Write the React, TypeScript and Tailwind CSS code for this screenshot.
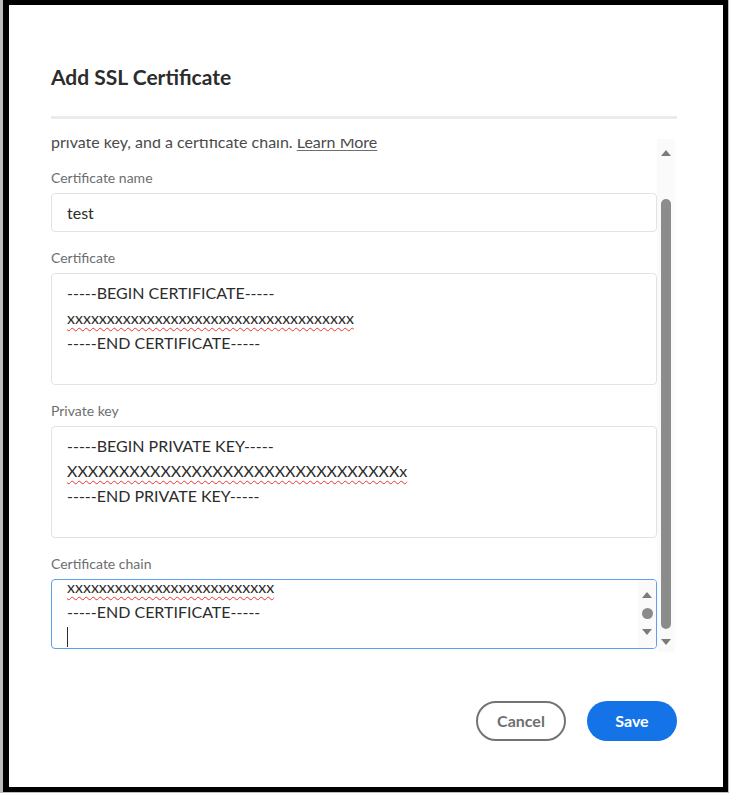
const font = { fontFamily: 'Lato, "Open Sans", Arial, sans-serif' };

function UpArrow({ className = '' }: { className?: string }) {
	return (
		<svg width="10" height="6" viewBox="0 0 10 6" className={className}>
			<path d="M0 6 L5 0 L10 6 Z" fill="#7b7b7b" />
		</svg>
	);
}

function DownArrow({ className = '' }: { className?: string }) {
	return (
		<svg width="10" height="6" viewBox="0 0 10 6" className={className}>
			<path d="M0 0 L10 0 L5 6 Z" fill="#7b7b7b" />
		</svg>
	);
}

function Squiggle({ children }: { children: string }) {
	return (
		<span className="underline decoration-wavy decoration-[#e33] decoration-1 underline-offset-[3px]">
			{children}
		</span>
	);
}

function Label({ children }: { children: string }) {
	return <div className="mb-[7px] text-[14px] leading-[17px] text-[#6e6e6e]">{children}</div>;
}

function PemBox({ lines }: { lines: Array<string | { squiggle: string }> }) {
	return (
		<div className="h-[112px] rounded-[4px] border border-[#e3e3e3] bg-white px-[15px] pt-[6px] text-[16px] leading-[25px] text-[#2c2c2c]">
			{lines.map((line, i) => (
				<div key={i}>{typeof line === 'string' ? line : <Squiggle>{line.squiggle}</Squiggle>}</div>
			))}
		</div>
	);
}

export default function App() {
	return (
		<div
			className="h-[793px] w-[729px] border-b border-l-[3px] border-r border-[#bcbcbc] bg-black pl-[6px] pt-[5px]"
			style={font}
		>
			<div className="flex h-[782px] w-[714px] flex-col bg-white pl-[42px] pr-[46px]">
				<h1 className="mt-[57px] text-[21px] font-bold leading-[29px] text-[#2c2c2c]">
					Add SSL Certificate
				</h1>
				<div className="mt-[25px] h-[3px] bg-[#ebebeb]" />

				<div className="mt-[20px] flex h-[513px]">
					{/* scrolled content, the intro text sits partly above the fold */}
					<div className="w-[606px] overflow-hidden">
						<div className="-mt-[7px] text-[16px] leading-[19px] text-[#4b4b4b]">
							private key, and a certificate chain.{' '}
							<span className="underline decoration-[#6e6e6e] underline-offset-2">Learn More</span>
						</div>

						<div className="mt-[18px]">
							<Label>Certificate name</Label>
							<div className="flex h-[39px] items-center rounded-[4px] border border-[#e3e3e3] px-[15px] text-[16px] text-[#2c2c2c]">
								test
							</div>
						</div>

						<div className="mt-[17px]">
							<Label>Certificate</Label>
							<PemBox
								lines={[
									'-----BEGIN CERTIFICATE-----',
									{ squiggle: 'xxxxxxxxxxxxxxxxxxxxxxxxxxxxxxxxxxxx' },
									'-----END CERTIFICATE-----',
								]}
							/>
						</div>

						<div className="mt-[17px]">
							<Label>Private key</Label>
							<PemBox
								lines={[
									'-----BEGIN PRIVATE KEY-----',
									{ squiggle: 'XXXXXXXXXXXXXXXXXXXXXXXXXXXXXXXXx' },
									'-----END PRIVATE KEY-----',
								]}
							/>
						</div>

						<div className="mt-[17px]">
							<Label>Certificate chain</Label>
							<div className="flex h-[70px] overflow-hidden rounded-[4px] border border-[#5c9ff0] bg-white">
								<div className="flex-1 overflow-hidden pl-[15px] text-[16px] leading-[25px] text-[#2c2c2c]">
									<div className="-mt-[6px]">
										<Squiggle>xxxxxxxxxxxxxxxxxxxxxxxxxx</Squiggle>
									</div>
									<div>-----END CERTIFICATE-----</div>
									<div className="flex h-[25px] items-center">
										<span className="h-[20px] w-px bg-[#2c2c2c]" />
									</div>
								</div>
								<div className="flex w-[18px] flex-col items-center bg-[#fafafa] pt-[12px]">
									<UpArrow />
									<span className="mt-[10px] h-[11px] w-[11px] rounded-full bg-[#8a8a8a]" />
									<DownArrow className="mt-[10px]" />
								</div>
							</div>
						</div>
					</div>

					{/* outer scrollbar */}
					<div className="flex w-[18px] flex-col items-center bg-[#fafafa] pt-[11px]">
						<UpArrow />
						<div className="mt-[43px] h-[430px] w-[10px] rounded-full bg-[#8c8c8c]" />
						<DownArrow className="mt-[10px]" />
					</div>
				</div>

				<div className="mt-[49px] flex justify-end gap-[21px]">
					<button
						type="button"
						className="flex h-[40px] w-[90px] items-center justify-center rounded-full border-2 border-[#747474] text-[16px] font-bold text-[#6e6e6e]"
					>
						Cancel
					</button>
					<button
						type="button"
						className="flex h-[40px] w-[90px] items-center justify-center rounded-full bg-[#1473e6] text-[16px] font-bold text-white"
					>
						Save
					</button>
				</div>
			</div>
		</div>
	);
}
